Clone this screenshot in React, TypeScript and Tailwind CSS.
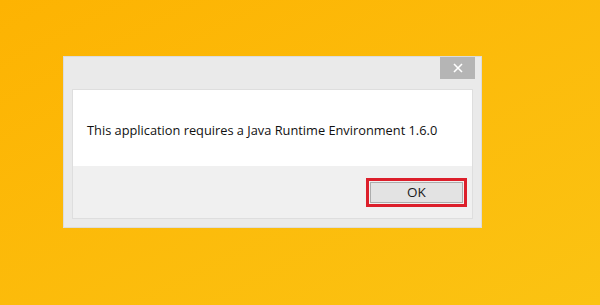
export default function App() {
  return (
    <div className="w-[600px] h-[305px] bg-gradient-to-br from-[#fdb302] to-[#fbc312] pt-[56px] pl-[63px]" style={{ fontFamily: '"Open Sans", "Noto Sans", sans-serif' }}>
      <div className="w-[419px] h-[172px] bg-[#eaeaea] border border-[#dcdcdc] flex flex-col px-[8px] pb-[8px]">
        <div className="h-[32px] flex justify-end">
          <div className="w-[35px] h-[22px] bg-[#b5b5b5] flex items-center justify-center -mr-[2px]">
            <svg width="10" height="10" viewBox="0 0 10 10">
              <path d="M1 1 L9 9 M9 1 L1 9" stroke="white" strokeWidth="1.6" />
            </svg>
          </div>
        </div>
        <div className="flex-1 flex flex-col border border-[#dedede]">
          <div className="h-[76px] bg-white flex items-center pl-[14px] pt-[6px]">
            <span className="text-[12.8px] text-[#111]">This application requires a Java Runtime Environment 1.6.0</span>
          </div>
          <div className="flex-1 bg-[#f0f0f0] flex justify-end items-start pt-[12px] pr-[5px]">
            <div className="w-[101px] h-[29px] border-[3px] border-[#dc1f2b] p-[1px]">
              <div className="w-full h-full bg-[#e3e3e3] border border-[#adadad] flex items-center justify-center text-[13.5px] text-[#1a1a1a]">OK</div>
            </div>
          </div>
        </div>
      </div>
    </div>
  );
}
